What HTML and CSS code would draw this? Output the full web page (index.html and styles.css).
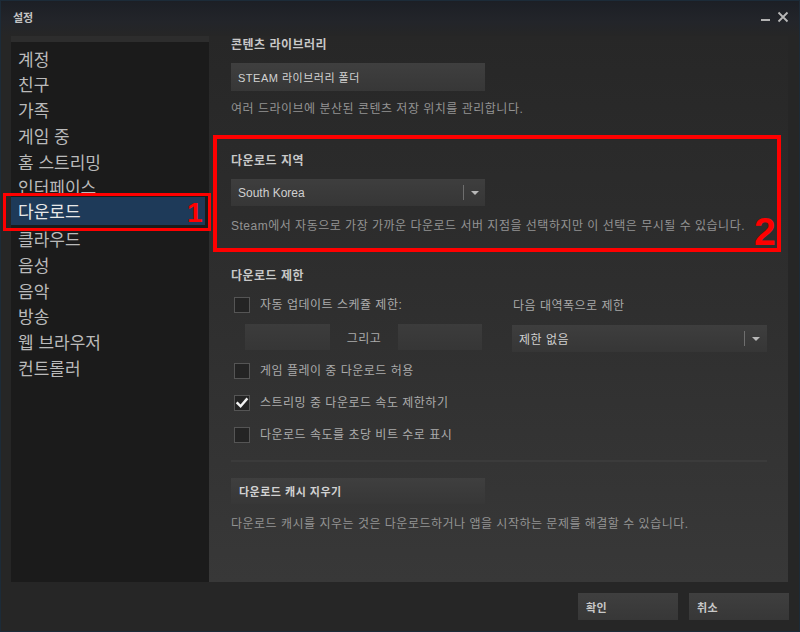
FILE: index.html
```html
<!DOCTYPE html>
<html lang="ko">
<head>
<meta charset="utf-8">
<title>설정</title>
<link rel="stylesheet" href="styles.css">
</head>
<body>
<div class="window">
  <header class="titlebar">
    <span class="title">설정</span>
    <div class="controls">
      <svg class="min" width="10" height="12" viewBox="0 0 10 12"><rect x="0" y="8" width="9" height="2" fill="#b2b2b2"/></svg>
      <svg class="close" width="12" height="12" viewBox="0 0 12 12"><path d="M1.5 1.5 L10.5 10.5 M10.5 1.5 L1.5 10.5" stroke="#b8b8b8" stroke-width="1.8" fill="none"/></svg>
    </div>
  </header>

  <div class="main">
    <nav class="sidebar">
      <div class="strip"></div>
      <ul class="nav">
        <li>계정</li>
        <li>친구</li>
        <li>가족</li>
        <li>게임 중</li>
        <li>홈 스트리밍</li>
        <li>인터페이스</li>
        <li class="active">다운로드</li>
        <li>클라우드</li>
        <li>음성</li>
        <li>음악</li>
        <li>방송</li>
        <li>웹 브라우저</li>
        <li>컨트롤러</li>
      </ul>
    </nav>

    <section class="content">
      <h2 class="sec-title first">콘텐츠 라이브러리</h2>
      <div class="btn wide lib">STEAM 라이브러리 폴더</div>
      <p class="desc d1">여러 드라이브에 분산된 콘텐츠 저장 위치를 관리합니다.</p>

      <h2 class="sec-title region">다운로드 지역</h2>
      <div class="select wide sel-region">
        <span class="sel-text">South Korea</span>
        <span class="sel-arrow"><i></i></span>
      </div>
      <p class="desc d2">Steam에서 자동으로 가장 가까운 다운로드 서버 지점을 선택하지만 이 선택은 무시될 수 있습니다.</p>

      <h2 class="sec-title limit">다운로드 제한</h2>
      <div class="limit-grid">
        <div class="col-left">
          <div class="cb-row">
            <span class="cb"></span>
            <span class="cb-label">자동 업데이트 스케쥴 제한:</span>
          </div>
          <div class="time-row">
            <span class="field f1"></span>
            <span class="and">그리고</span>
            <span class="field f2"></span>
          </div>
        </div>
        <div class="col-right">
          <div class="sub-label">다음 대역폭으로 제한</div>
          <div class="select sel-bw">
            <span class="sel-text">제한 없음</span>
            <span class="sel-arrow"><i></i></span>
          </div>
        </div>
      </div>

      <div class="cb-list">
        <div class="cb-row">
          <span class="cb"></span>
          <span class="cb-label">게임 플레이 중 다운로드 허용</span>
        </div>
        <div class="cb-row">
          <span class="cb checked"><svg width="14" height="14" viewBox="0 0 14 14"><path d="M2.5 7.2 L5.6 10.3 L11.6 3.3" stroke="#f2f2f2" stroke-width="2.4" fill="none" stroke-linecap="square"/></svg></span>
          <span class="cb-label">스트리밍 중 다운로드 속도 제한하기</span>
        </div>
        <div class="cb-row">
          <span class="cb"></span>
          <span class="cb-label">다운로드 속도를 초당 비트 수로 표시</span>
        </div>
      </div>

      <div class="separator"></div>

      <div class="btn wide cache">다운로드 캐시 지우기</div>
      <p class="desc d3">다운로드 캐시를 지우는 것은 다운로드하거나 앱을 시작하는 문제를 해결할 수 있습니다.</p>
    </section>
  </div>

  <footer class="footer">
    <div class="btn foot">확인</div>
    <div class="btn foot">취소</div>
  </footer>

  <div class="mark mark1"></div>
  <span class="num num1">1</span>
  <div class="mark mark2"></div>
  <span class="num num2">2</span>
</div>
</body>
</html>
```

FILE: styles.css
```css
* { box-sizing: border-box; margin: 0; padding: 0; }

html, body {
  width: 800px;
  height: 632px;
  overflow: hidden;
  background: #262626;
}

body {
  font-family: "Liberation Sans", "Noto Sans CJK KR", sans-serif;
  font-size: 12px;
  color: #c0c0c0;
}

.window {
  position: relative;
  width: 800px;
  height: 632px;
  border: 1px solid #1c2b38;
  background: #262626;
  display: flex;
  flex-direction: column;
}

/* title bar */
.titlebar {
  height: 35px;
  display: flex;
  align-items: flex-start;
  padding: 0 10px 0 12px;
  background: linear-gradient(#1c1f25, #23252a 60%, #262626);
}

.title {
  margin-top: 8px;
  line-height: 16px;
  font-size: 11px;
  font-weight: bold;
  color: #c4c4c4;
  font-family: "Noto Sans CJK KR", sans-serif;
}

.controls {
  margin-left: auto;
  margin-top: 10px;
  display: flex;
  align-items: flex-start;
  gap: 6px;
}

/* main area */
.main {
  height: 546px;
  display: flex;
  padding: 0 11px 0 10px;
}

.sidebar {
  width: 198px;
  background: #1b1b1b;
}

.strip {
  height: 6px;
  background: #2d2d2d;
}

.nav {
  list-style: none;
  padding-top: 3.5px;
}

.nav li {
  height: 25.8px;
  line-height: 25.8px;
  padding-left: 7px;
  margin-right: 4px;
  font-size: 17px;
  color: #bababa;
  font-family: "Noto Sans CJK KR", sans-serif;
}

.nav li.active {
  height: 28px;
  line-height: 28px;
  margin-top: -3px;
  margin-bottom: 0.8px;
  background: #1e3a59;
  color: #e8e8e8;
}

.content {
  flex: 1;
  padding: 0 21px 0 22px;
  background: linear-gradient(#272727, #2e2e2e 45%, #383838);
  letter-spacing: 0.5px;
}

.sec-title {
  font-size: 12px;
  line-height: 16px;
  font-weight: bold;
  color: #c8c8c8;
}

.sec-title.first { margin-top: 1px; }
.sec-title.region { margin-top: 36px; }
.sec-title.limit { margin-top: 34px; }

.desc {
  font-size: 12px;
  line-height: 16px;
  color: #939393;
}

.d1 { margin-top: 10px; }
.d2 { margin-top: 12px; }
.d3 { margin-top: 12px; }

.btn {
  display: flex;
  align-items: center;
  background: linear-gradient(#3f3f3f, #373737);
  color: #d2d2d2;
  font-size: 11px;
}

.wide { width: 254px; }

.lib {
  margin-top: 10px;
  height: 28px;
  padding-left: 7px;
}

.cache {
  margin-top: 16px;
  height: 26px;
  padding-left: 8px;
  font-weight: bold;
  font-size: 11px;
}

.select {
  display: flex;
  align-items: center;
  height: 27px;
  background: linear-gradient(#3e3e3e, #363636);
  color: #d0d0d0;
}

.sel-region { margin-top: 10px; }

.sel-text {
  flex: 1;
  padding-left: 7px;
  font-size: 12px;
  letter-spacing: 0;
}

.sel-bw .sel-text { letter-spacing: 0.5px; }

.sel-arrow {
  width: 22px;
  height: 15px;
  border-left: 1px solid #6e6e6e;
  display: flex;
  align-items: center;
  justify-content: center;
}

.sel-arrow i {
  width: 0;
  height: 0;
  border-left: 4px solid transparent;
  border-right: 4px solid transparent;
  border-top: 4px solid #b8b8b8;
}

/* download limit */
.limit-grid {
  margin-top: 13px;
  display: flex;
  align-items: flex-start;
}

.col-left { width: 281px; }

.col-right { width: 255px; }

.sub-label {
  margin-top: 1px;
  line-height: 16px;
  color: #a8a8a8;
  padding-left: 1px;
}

.sel-bw { margin-top: 11px; }

.sel-bw .sel-arrow { width: 23px; }

.cb-row {
  display: flex;
  align-items: center;
  height: 16px;
  padding-left: 3px;
}

.cb {
  width: 16px;
  height: 16px;
  border: 1px solid #555;
  background: #242424;
  display: flex;
  align-items: center;
  justify-content: center;
}

.cb-label {
  margin-left: 10px;
  line-height: 16px;
  color: #ababab;
}

.time-row {
  margin-top: 11px;
  display: flex;
  align-items: center;
  padding-left: 14px;
}

.field {
  height: 26px;
  background: linear-gradient(#3c3c3c, #363636);
}

.f1 { width: 85px; }
.f2 { width: 84px; }

.and {
  width: 68px;
  text-align: center;
  color: #ababab;
}

.cb-list {
  margin-top: 11px;
  display: flex;
  flex-direction: column;
  gap: 16px;
}

.separator {
  margin-top: 17px;
  width: 536px;
  height: 2px;
  background: #3b3b3b;
}

/* footer */
.footer {
  flex: 1;
  display: flex;
  justify-content: flex-end;
  align-items: flex-start;
  gap: 11px;
  padding: 11px 10px 0 0;
}

.foot {
  width: 100px;
  height: 27px;
  padding-left: 8px;
  font-weight: bold;
  font-size: 11px;
  color: #c8c8c8;
  letter-spacing: 0.5px;
}

/* annotation overlays */
.mark {
  position: absolute;
  border-style: solid;
  border-color: #ff0000;
}

.mark1 {
  left: 2px;
  top: 192px;
  width: 208px;
  height: 38px;
  border-width: 3px;
}

.mark2 {
  left: 212px;
  top: 134px;
  width: 568px;
  height: 117px;
  border-width: 4px;
}

.num {
  position: absolute;
  color: #ff0000;
  font-family: "Liberation Sans", sans-serif;
  font-weight: bold;
  line-height: 1;
}

.num1 {
  left: 186px;
  top: 198px;
  font-size: 28px;
}

.num2 {
  left: 753px;
  top: 211px;
  font-size: 39px;
}
```
